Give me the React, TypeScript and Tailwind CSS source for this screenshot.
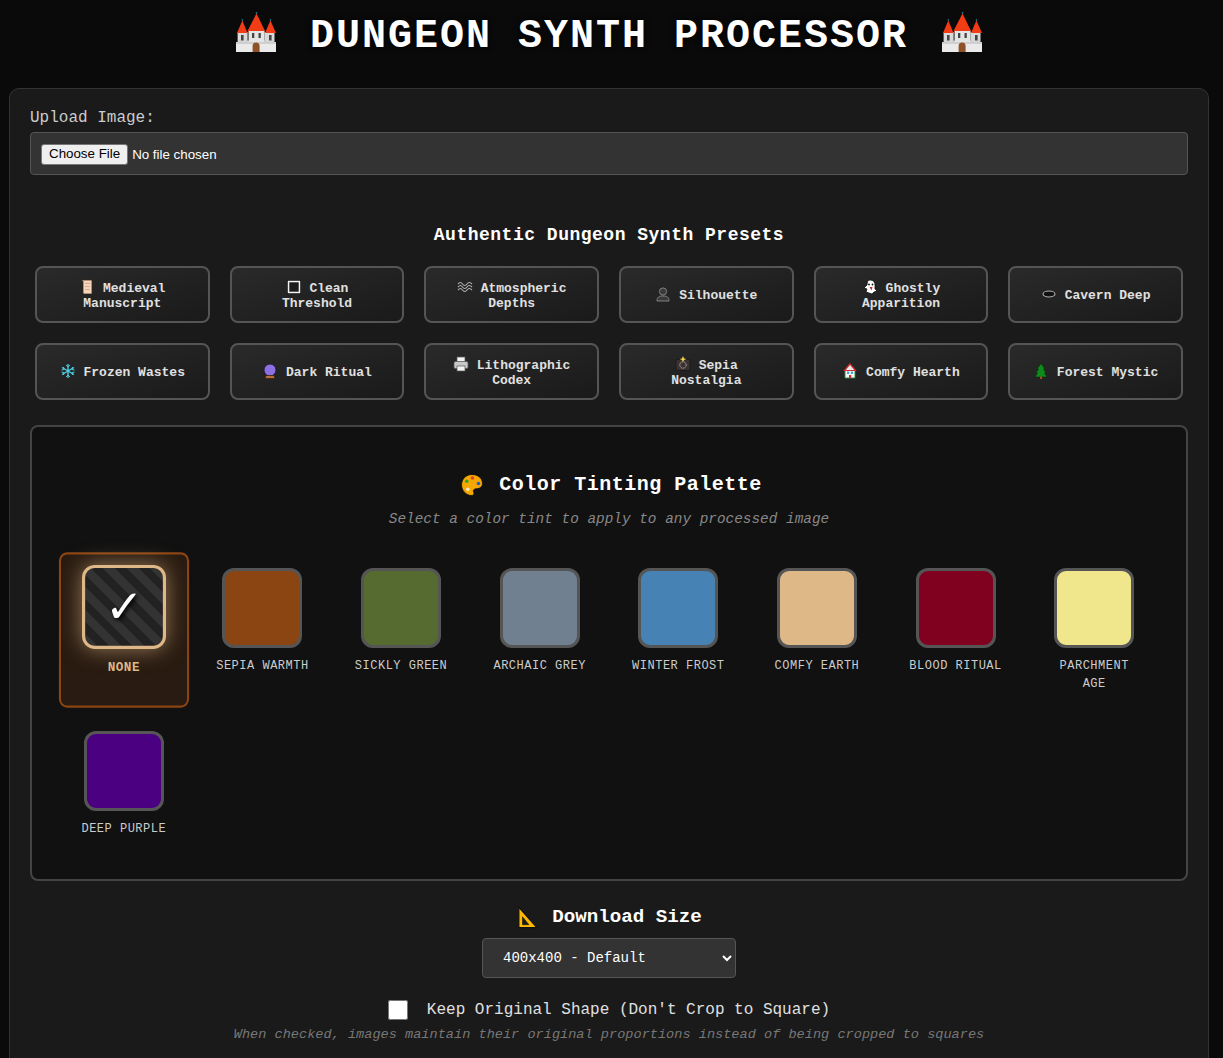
import type { ReactNode } from 'react';

// Small pictures drawn by hand, 16x16 box
const icons: Record<string, ReactNode> = {
  scroll: (
    <>
      <path d="M2 1h11v14H5c-1 0-1-1-1-2V3C4 2 3 1 2 1z" fill="#f6d5bd" stroke="#3a2418" strokeWidth="0.8" />
      <path d="M6 4.500h5M6 7.500h5M6 10.500h5" stroke="#d9a98a" strokeWidth="1" />
    </>
  ),
  square: (
    <>
      <rect x="1" y="1" width="14" height="14" fill="#000" />
      <rect x="2.500" y="2.500" width="11" height="11" fill="#1c1c1c" stroke="#f2f2f2" strokeWidth="1.600" />
    </>
  ),
  waves: (
    <path
      d="M1 5c2-2 3-2 4.500 0s3 2 4.500 0 3-2 5 0M1 8c2-2 3-2 4.500 0s3 2 4.500 0 3-2 5 0M1 11c2-2 3-2 4.500 0s3 2 4.500 0 3-2 5 0"
      fill="none"
      stroke="#b5b5b5"
      strokeWidth="1.100"
    />
  ),
  bust: (
    <>
      <circle cx="8" cy="5.500" r="3.600" fill="#3a3a3a" stroke="#8a8a8a" strokeWidth="0.900" />
      <path d="M2 15c0-4 2-5 6-5s6 1 6 5z" fill="#3a3a3a" stroke="#8a8a8a" strokeWidth="0.900" />
    </>
  ),
  ghost: (
    <>
      <path d="M8 1c3.500 0 5 2.500 5 5v4l2 2-3 1-2 2-3-1-3-1 1-3-3-1 3-3C5 3 6 1 8 1z" fill="#fff" stroke="#111" strokeWidth="0.800" />
      <circle cx="7" cy="5.500" r="0.900" fill="#111" />
      <circle cx="10.500" cy="5.500" r="0.900" fill="#111" />
      <path d="M7.500 8h3l-1 3.500z" fill="#d3232c" />
    </>
  ),
  hole: <ellipse cx="8" cy="8" rx="6" ry="3" fill="#111" stroke="#b0b0b0" strokeWidth="1.100" />,
  snow: (
    <g stroke="#4fd0e6" strokeWidth="1.300" fill="none">
      <path d="M8 1v14M2 4.500l12 7M14 4.500l-12 7" />
      <path d="M6 2l2 2 2-2M6 14l2-2 2 2M1.500 7l2.500-.5L3.500 4M14.500 9l-2.500.5.500 2.500M14.500 7L12 6.500 12.500 4M1.500 9l2.500.5L3.500 12" strokeWidth="0.900" />
    </g>
  ),
  ball: (
    <>
      <circle cx="8" cy="7" r="6" fill="#8a70e0" stroke="#1a1030" strokeWidth="0.800" />
      <path d="M4 12.500h8l1 3H3z" fill="#b5703a" stroke="#2a1608" strokeWidth="0.600" />
    </>
  ),
  printer: (
    <>
      <rect x="4" y="1" width="8" height="5" fill="#f2f2f2" stroke="#555" strokeWidth="0.700" />
      <rect x="1" y="5.500" width="14" height="7" rx="1.500" fill="#c8c8c8" stroke="#555" strokeWidth="0.700" />
      <rect x="4" y="10" width="8" height="5" fill="#f2f2f2" stroke="#555" strokeWidth="0.700" />
    </>
  ),
  camera: (
    <>
      <rect x="1" y="3.500" width="14" height="11" rx="1" fill="#3a3230" stroke="#111" strokeWidth="0.600" />
      <circle cx="8" cy="9" r="3.200" fill="none" stroke="#cfcfcf" strokeWidth="0.900" strokeDasharray="1.200 0.800" />
      <path d="M8 0l1 2.500L11.500 3 9 4 8 6 7 4 4.500 3 7 2.500z" fill="#f6d84a" />
    </>
  ),
  house: (
    <>
      <path d="M3 7v8h10V7" fill="#f8f8f8" stroke="#1f8a3c" strokeWidth="0.900" />
      <path d="M8 1L2.500 7.500h11z" fill="#e8e8e8" stroke="#d62c2c" strokeWidth="1.200" />
      <rect x="5" y="8.500" width="2.200" height="2.500" fill="#38a9dc" />
      <rect x="8.800" y="8.500" width="2.200" height="2.500" fill="#38a9dc" />
      <rect x="7" y="12" width="2.200" height="3" fill="#d62c2c" />
    </>
  ),
  tree: (
    <>
      <path d="M8 0.500L12 6h-1.500L13 10h-1.500L14 14H2l2.500-4H3l2.500-4H4z" fill="#0f8a1e" stroke="#062f0a" strokeWidth="0.600" />
      <rect x="7" y="13.500" width="2" height="2.500" fill="#a0521d" />
    </>
  ),
  palette: (
    <>
      <path d="M8 1C4 1 1 4 1 8c0 3.500 3 7 6.500 7 2 0 2-1.500 1.500-2.500s.5-2 2-2c2.500 0 4-1.500 4-3.500C15 3.500 12 1 8 1z" fill="#f6a800" stroke="#111" strokeWidth="0.600" />
      <circle cx="4.500" cy="5.500" r="1.200" fill="#29a82f" />
      <circle cx="8.300" cy="3.300" r="1.200" fill="#e8402a" />
      <circle cx="12.300" cy="7" r="1.200" fill="#1f5fd6" />
      <circle cx="5.200" cy="10.800" r="1.200" fill="#f5e9c8" />
    </>
  ),
  ruler: (
    <>
      <path d="M2 1l12.500 14H2z" fill="#ffb900" stroke="#111" strokeWidth="0.800" />
      <path d="M4.500 7.500l4.500 5.500H4.500z" fill="#1a1a1a" stroke="#111" strokeWidth="0.400" />
    </>
  ),
};

function Icon({ name, className }: { name: string; className: string }) {
  return (
    <svg viewBox="0 0 16 16" className={className}>
      {icons[name]}
    </svg>
  );
}

function Castle() {
  return (
    <svg viewBox="0 0 40 40" className="mt-[-4px] h-10 w-10 shrink-0">
      <rect x="1.600" y="20" width="10" height="11" fill="#d8d8d8" />
      <rect x="28.500" y="20" width="10" height="11" fill="#d8d8d8" />
      <rect x="12.500" y="18" width="16" height="15" fill="#e4e4e4" />
      <path d="M6.300 8.500L11.500 21H1z" fill="#f23c16" />
      <path d="M34.400 8.500L40 21H29z" fill="#f23c16" />
      <path d="M20.500 1.500L29 19H11.500z" fill="#f23c16" />
      <rect x="0" y="30" width="40" height="10" fill="#eaeaea" />
      <path d="M0 30h3v-1.500h3V30h4v-1.500h3V30h15v-1.500h3V30h4v-1.500h3V30h2v2H0z" fill="#cfcfcf" />
      <path d="M16.600 40v-6a3.500 3.500 0 0 1 7 0v6z" fill="#8f5128" />
      <rect x="16" y="21" width="2.300" height="5" fill="#444" />
      <rect x="22.500" y="21" width="2.300" height="5" fill="#444" />
      <rect x="5" y="23" width="2.600" height="5.500" fill="#444" />
      <rect x="33" y="23" width="2.600" height="5.500" fill="#444" />
      <circle cx="20.500" cy="1" r="0.800" fill="#2aa7c9" />
      <circle cx="6.300" cy="8" r="0.700" fill="#2aa7c9" />
      <circle cx="34.400" cy="8" r="0.700" fill="#2aa7c9" />
    </svg>
  );
}

const presets = [
  { icon: 'scroll', name: 'Medieval Manuscript' },
  { icon: 'square', name: 'Clean Threshold' },
  { icon: 'waves', name: 'Atmospheric Depths' },
  { icon: 'bust', name: 'Silhouette' },
  { icon: 'ghost', name: 'Ghostly Apparition' },
  { icon: 'hole', name: 'Cavern Deep' },
  { icon: 'snow', name: 'Frozen Wastes' },
  { icon: 'ball', name: 'Dark Ritual' },
  { icon: 'printer', name: 'Lithographic Codex' },
  { icon: 'camera', name: 'Sepia Nostalgia' },
  { icon: 'house', name: 'Comfy Hearth' },
  { icon: 'tree', name: 'Forest Mystic' },
];

const tints = [
  { name: 'Sepia Warmth', swatch: 'bg-[#8b4513]' },
  { name: 'Sickly Green', swatch: 'bg-[#556b2f]' },
  { name: 'Archaic Grey', swatch: 'bg-[#708090]' },
  { name: 'Winter Frost', swatch: 'bg-[#4682b4]' },
  { name: 'Comfy Earth', swatch: 'bg-[#deb887]' },
  { name: 'Blood Ritual', swatch: 'bg-[#800020]' },
  { name: 'Parchment Age', swatch: 'bg-[#f0e68c]' },
  { name: 'Deep Purple', swatch: 'bg-[#4b0082]' },
];

export default function App() {
  return (
    <div className="h-screen overflow-hidden bg-[#0a0a0a] pr-[14px] pl-[9px] font-['Liberation_Mono',monospace] text-[#e0e0e0]">
      <h1 className="flex h-[88px] justify-center gap-[34px] pt-4 text-[40px] leading-[42px] font-bold tracking-[2px] text-white [text-shadow:0_0_6px_#000]">
        <Castle />
        <span>DUNGEON SYNTH PROCESSOR</span>
        <Castle />
      </h1>

      <div className="h-[1100px] rounded-[10px] border border-[#333] bg-[#1a1a1a] px-5 pt-[20px]">
        <label className="block text-base leading-[18px] text-[#ccc]">Upload Image:</label>
        <div className="mt-[5px] h-[43px] rounded border border-[#555] bg-[#333] pt-[9px] pl-[10px]">
          <input
            type="file"
            className="font-['Liberation_Sans',sans-serif] text-[13.33px] leading-[18px] text-white file:mr-[4px] file:rounded-[3px] file:border file:border-[#767676] file:bg-[#efefef] file:px-[7px] file:py-[0.5px] file:text-black"
          />
        </div>

        <h3 className="mt-[50px] text-center text-[18px] leading-5 font-bold tracking-[0.5px] text-white">
          Authentic Dungeon Synth Presets
        </h3>
        <div className="mt-[21px] grid grid-cols-6 gap-5 px-[5px]">
          {presets.map((p) => (
            <button
              key={p.name}
              className="h-[57px] rounded-lg border-2 border-[#555] bg-gradient-to-br from-[#2a2a2a] to-[#1a1a1a] px-5 pt-[2px] text-center text-[13px] leading-[15px] font-bold text-[#e0e0e0]"
            >
              <Icon name={p.icon} className="-my-1 inline-block h-4 w-4 align-[1px]" /> {p.name}
            </button>
          ))}
        </div>

        <div className="mt-[25px] rounded-lg border-2 border-[#444] bg-[#111] p-[30px]">
          <h3 className="mt-[16px] flex items-center justify-center gap-[15px] pl-1 text-[20px] leading-[24px] font-bold tracking-[0.5px] text-white">
            <Icon name="palette" className="h-[24px] w-[24px]" />
            Color Tinting Palette
          </h3>
          <p className="mt-[14px] text-center text-[14.4px] leading-[17px] text-[#888] italic">
            Select a color tint to apply to any processed image
          </p>
          <div className="mt-[28px] grid grid-cols-8 gap-[15px]">
            <div className="flex scale-105 flex-col items-center rounded-lg border-2 border-[#8b4513] bg-[#8b4513]/20 px-2.5 pt-2.5 pb-[9px]">
              <div className="flex h-20 w-20 items-center justify-center rounded-xl border-[3px] border-[#deb887] bg-[repeating-linear-gradient(45deg,#333,#333_8px,#222_8px,#222_16px)] pt-1 text-[50px] leading-none font-bold text-white shadow-[0_0_20px_rgba(222,184,135,0.6)] [text-shadow:2px_2px_4px_#000]">
                ✓
              </div>
              <span className="mt-[9px] text-center text-xs leading-[18px] font-bold tracking-[0.5px] text-[#deb887] uppercase">None</span>
            </div>
            {tints.map((t) => (
              <div key={t.name} className="flex flex-col items-center rounded-lg border-2 border-transparent px-2.5 pt-2.5 pb-[9px]">
                <div className={`h-20 w-20 rounded-xl border-[3px] border-[#555] ${t.swatch}`} />
                <span className="mt-[9px] text-center text-xs leading-[18px] tracking-[0.5px] text-[#ccc] uppercase">{t.name}</span>
              </div>
            ))}
          </div>
        </div>

        <div className="mt-[25px] flex flex-col items-center">
          <h4 className="flex h-[22px] items-center gap-[13px] text-[19.2px] leading-[22px] font-bold text-white">
            <Icon name="ruler" className="h-[23px] w-[23px]" />
            Download Size
          </h4>
          <select className="mt-[10px] h-10 w-[254px] rounded border border-[#555] bg-[#333] px-4 text-sm text-white">
            <option>400x400 - Default</option>
            <option>800x800 - Large</option>
          </select>
          <label className="mt-[22px] flex items-center gap-[19px] text-base leading-5 text-[#e0e0e0]">
            <input type="checkbox" className="h-5 w-5" />
            Keep Original Shape (Don't Crop to Square)
          </label>
          <p className="mt-[7px] text-[13.6px] leading-4 text-[#777] italic">
            When checked, images maintain their original proportions instead of being cropped to squares
          </p>
        </div>
      </div>
    </div>
  );
}
